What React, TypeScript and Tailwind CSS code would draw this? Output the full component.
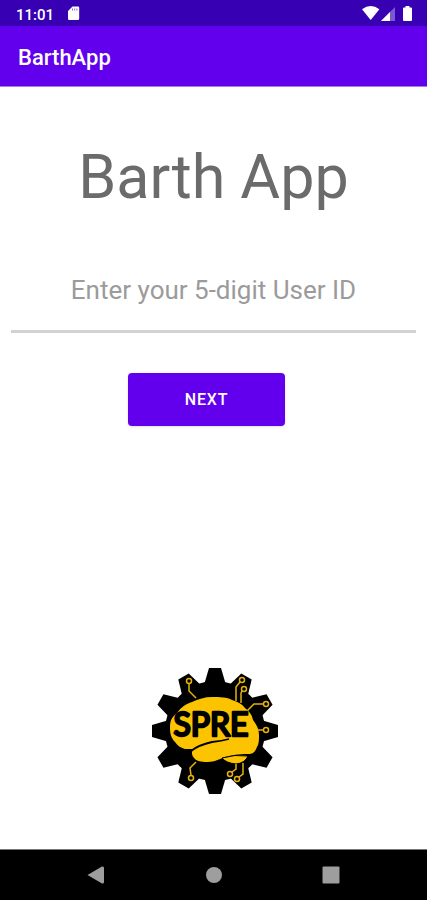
import React from "react";

function StatusBar() {
  return (
    <div className="flex h-[26px] items-center bg-[#3700b3] pl-4 pr-[15px] text-[15px] font-medium text-white">
      <time className="pt-[3px] leading-6">11:01</time>
      <svg className="ml-3 h-4 w-4" viewBox="0 0 16 16" aria-hidden="true">
        <path d="M6.500 1.500H12a1.200 1.200 0 0 1 1.200 1.200v11a1.200 1.200 0 0 1-1.200 1.200H3.200A1.200 1.200 0 0 1 2 13.700V6Z" fill="white" />
        <path d="M6.500 3.500v2M8.700 3.500v2M10.900 3.500v2" stroke="#3700b3" strokeWidth="1" opacity="0.6" />
      </svg>
      <svg className="ml-auto h-4 w-[50px]" viewBox="0 0 50 16" aria-hidden="true">
        <path d="M0 4.200Q8.700-2.400 17.400 4.200L8.700 15Z" fill="white" />
        <path d="M33 2v14H19Z" fill="white" opacity="0.35" />
        <path d="M28 7v9H19Z" fill="white" />
        <path d="M42 2.500h1.500V1h4v1.500H49a1 1 0 0 1 1 1V15a1 1 0 0 1-1 1h-7a1 1 0 0 1-1-1V3.500a1 1 0 0 1 1-1Z" fill="white" />
      </svg>
    </div>
  );
}

const teeth = [0, 30, 60, 90, 120, 150, 180, 210, 240, 270, 300, 330];

function Logo() {
  return (
    <svg className="h-[130px] w-[130px]" viewBox="0 0 130 130" role="img" aria-label="SPRE">
      <circle cx="65" cy="65" r="50" fill="black" />
      {teeth.map((angle) => (
        <path key={angle} d="M54 19L59 2H71L76 19Z" fill="black" transform={`rotate(${angle} 65 65)`} />
      ))}
      <path
        d="M20 62C20 54 22 51 27 47C31 41 36 38 42 36C48 33 55 31 62 31C70 31 77 31 82 34C88 36 92 38 95 42C100 46 102 49 103 54C107 59 109 64 109 69C109 74 109 78 107 81C105 86 103 88 98 88C88 88 82 89 75 91C69 93 65 96 58 96C50 96 47 95 45 93C42 90 41 87 43 83C40 83 37 83 35 83C31 82 28 80 25 76C21 72 20 67 20 62Z"
        fill="#fbc300"
      />
      <path d="M41 85C46 81 53 78 62 76Q72 75 79 73" fill="none" stroke="black" strokeWidth="1.800" />
      <path d="M72 92Q85 88 98 90Q95 97 86 98Q76 97 72 92Z" fill="#fbc300" stroke="black" strokeWidth="1" />
      <g fill="none" stroke="#e5b20c" strokeWidth="1.500">
        <path d="M39 18v7l7 7M90 16l-4 5v14M92 25l-1 2v10M113 38h-9l-9 9M108 64h5M41 109l-1-7 6-6M82 106l4-3v-5M89 111l4-3V97" />
        <circle cx="39" cy="15" r="2.500" />
        <circle cx="92" cy="14" r="2.500" />
        <circle cx="94" cy="23" r="2.500" />
        <circle cx="116" cy="38" r="2.500" />
        <circle cx="116" cy="64" r="2.500" />
        <circle cx="41" cy="112" r="2.500" />
        <circle cx="80" cy="108" r="2.500" />
        <circle cx="87" cy="113" r="2.500" />
      </g>
      <text
        x="61"
        y="70"
        textAnchor="middle"
        fontFamily="Lato, sans-serif"
        fontSize="32"
        fontWeight="400"
        fill="black"
        stroke="black"
        strokeWidth="2.500"
        strokeLinejoin="round"
      >
        SPRE
      </text>
    </svg>
  );
}

export default function App() {
  return (
    <div className="flex min-h-screen flex-col bg-white font-[Roboto,sans-serif]">
      <StatusBar />
      <header className="flex h-[61px] items-center border-b border-[#a77cf0] bg-[#6200ee] px-[18px] pt-1">
        <span className="text-[22px] font-medium leading-7 text-white">BarthApp</span>
      </header>
      <main className="flex flex-1 flex-col items-center px-[11px] pb-[53px] pt-[54px]">
        <h1 className="text-[61px] leading-[72px] text-[#6b6b6b]">Barth App</h1>
        <input
          type="text"
          inputMode="numeric"
          maxLength={5}
          aria-label="User ID"
          placeholder="Enter your 5-digit User ID"
          className="mt-9 h-[84px] w-full border-b-[3px] border-[#d2d2d2] text-center text-[26px] outline-none placeholder:text-[#9b9b9b]"
        />
        <button type="button" className="mr-[14px] mt-10 h-[53px] w-[157px] rounded bg-[#6200ee] text-base font-medium tracking-wider text-white shadow-sm">
          NEXT
        </button>
        <div className="mt-auto pl-[2px]">
          <Logo />
        </div>
      </main>
      <nav className="flex h-[51px] items-center justify-between border-t border-[#777777] bg-black px-[86px] text-[#9e9e9e]">
        <button type="button" aria-label="Back">
          <svg className="h-5 w-5" viewBox="0 0 20 20" fill="currentColor"><path d="M1.500 10L16 1.500Q18 1 18 3v14q0 2-2 1.500Z" /></svg>
        </button>
        <button type="button" aria-label="Home">
          <svg className="h-5 w-5" viewBox="0 0 20 20" fill="currentColor"><circle cx="10" cy="10" r="8" /></svg>
        </button>
        <button type="button" aria-label="Overview">
          <svg className="h-5 w-5" viewBox="0 0 20 20" fill="currentColor"><rect x="1.500" y="1.500" width="17" height="17" rx="1" /></svg>
        </button>
      </nav>
    </div>
  );
}
